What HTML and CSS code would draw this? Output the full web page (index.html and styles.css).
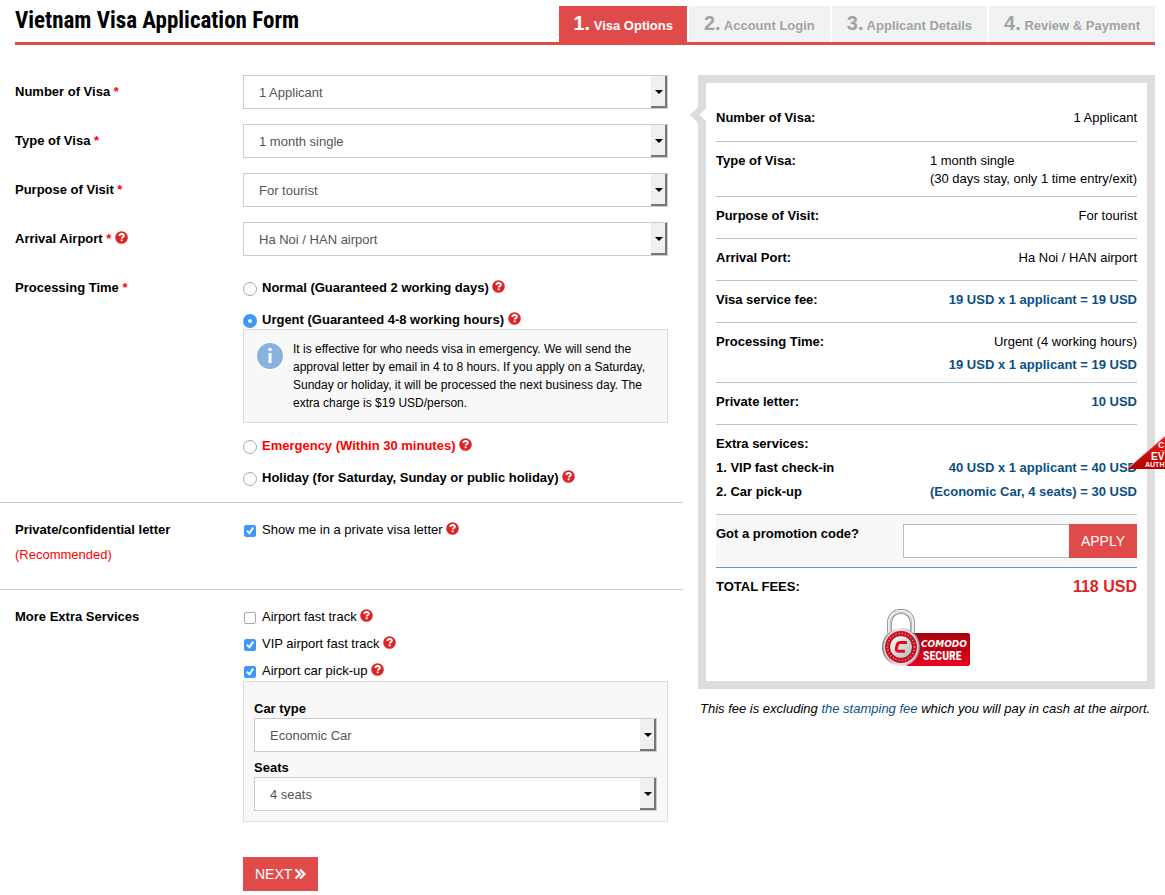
FILE: index.html
```html
<!DOCTYPE html>
<html lang="en">
<head>
<meta charset="utf-8">
<meta name="viewport" content="width=device-width, initial-scale=1">
<title>Vietnam Visa Application Form</title>
<link rel="stylesheet" href="styles.css">
</head>
<body>
<svg class="sprite" aria-hidden="true">
  <symbol id="help" viewBox="0 0 13 13">
    <circle cx="6.5" cy="6.5" r="6.3" fill="#dc2626"/>
    <path d="M4.3 5C4.5 3.6 5.4 3 6.6 3c1.300 0 2.200.7 2.200 1.800C8.800 6.200 6.700 6.200 6.700 7.500" fill="none" stroke="#fff" stroke-width="1.900"/>
    <rect x="5.700" y="8.500" width="1.900" height="1.700" fill="#fff"/>
  </symbol>
</svg>

<header class="top">
  <h1 class="title">Vietnam Visa Application Form</h1>
  <ol class="steps">
    <li class="step step-active"><span class="num">1.</span> Visa Options</li>
    <li class="step"><span class="num">2.</span> Account Login</li>
    <li class="step"><span class="num">3.</span> Applicant Details</li>
    <li class="step"><span class="num">4.</span> Review &amp; Payment</li>
  </ol>
</header>

<main class="layout">
  <form class="form">
    <section class="group">
      <div class="row">
        <label class="name" for="number">Number of Visa <span class="req">*</span></label>
        <div class="select"><select id="number"><option>1 Applicant</option></select></div>
      </div>
      <div class="row">
        <label class="name" for="type">Type of Visa <span class="req">*</span></label>
        <div class="select"><select id="type"><option>1 month single</option></select></div>
      </div>
      <div class="row">
        <label class="name" for="purpose">Purpose of Visit <span class="req">*</span></label>
        <div class="select"><select id="purpose"><option>For tourist</option></select></div>
      </div>
      <div class="row">
        <label class="name" for="airport">Arrival Airport <span class="req">*</span> <svg class="help"><use href="#help"/></svg></label>
        <div class="select"><select id="airport"><option>Ha Noi / HAN airport</option></select></div>
      </div>
      <div class="row">
        <div class="name" id="time">Processing Time <span class="req">*</span></div>
        <div class="options times" role="radiogroup" aria-labelledby="time">
          <label class="option"><input type="radio" name="time"><span>Normal (Guaranteed 2 working days) <svg class="help"><use href="#help"/></svg></span></label>
          <div class="detail">
            <label class="option"><input type="radio" name="time" checked><span>Urgent (Guaranteed 4-8 working hours) <svg class="help"><use href="#help"/></svg></span></label>
            <div class="box info">
              <svg class="info-icon" viewBox="0 0 28 28" aria-hidden="true">
                <circle cx="14" cy="14" r="14" fill="#fff"/>
                <circle cx="14" cy="14" r="13" fill="#8ab2de"/>
                <circle cx="14" cy="7.500" r="1.800" fill="#fff"/>
                <rect x="12.500" y="11" width="3" height="10" fill="#fff"/>
              </svg>
              <p class="info-text">It is effective for who needs visa in emergency. We will send the approval letter by email in 4 to 8 hours. If you apply on a Saturday, Sunday or holiday, it will be processed the next business day. The extra charge is $19 USD/person.</p>
            </div>
          </div>
          <label class="option hot"><input type="radio" name="time"><span>Emergency (Within 30 minutes) <svg class="help"><use href="#help"/></svg></span></label>
          <label class="option"><input type="radio" name="time"><span>Holiday (for Saturday, Sunday or public holiday) <svg class="help"><use href="#help"/></svg></span></label>
        </div>
      </div>
    </section>

    <section class="group">
      <div class="row">
        <div class="name">Private/confidential letter<p class="recommended">(Recommended)</p></div>
        <div class="options">
          <label class="option"><input type="checkbox" checked><span>Show me in a private visa letter <svg class="help"><use href="#help"/></svg></span></label>
        </div>
      </div>
    </section>

    <section class="group">
      <div class="row">
        <div class="name">More Extra Services</div>
        <div class="options extras">
          <label class="option"><input type="checkbox"><span>Airport fast track <svg class="help"><use href="#help"/></svg></span></label>
          <label class="option"><input type="checkbox" checked><span>VIP airport fast track <svg class="help"><use href="#help"/></svg></span></label>
          <div class="detail">
            <label class="option"><input type="checkbox" checked><span>Airport car pick-up <svg class="help"><use href="#help"/></svg></span></label>
            <div class="box car">
              <div class="car-field">
                <label for="car">Car type</label>
                <div class="select"><select id="car"><option>Economic Car</option></select></div>
              </div>
              <div class="car-field">
                <label for="seats">Seats</label>
                <div class="select"><select id="seats"><option>4 seats</option></select></div>
              </div>
            </div>
          </div>
          <button class="btn next" type="button">NEXT
            <svg class="chevrons" viewBox="0 0 12 12" aria-hidden="true"><path d="M1.500 1.500 6 6 1.500 10.500M6 1.500 10.500 6 6 10.500" fill="none" stroke="#fff" stroke-width="2.200"/></svg>
          </button>
        </div>
      </div>
    </section>
  </form>

  <aside class="side">
    <div class="panel">
      <svg class="pointer" viewBox="0 0 16 18" aria-hidden="true">
        <path d="M8 1 0 9l8 8z" fill="#ddd"/>
        <path d="M16 2 9.500 9l6.500 6z" fill="#fff"/>
      </svg>
      <dl class="summary">
        <div class="item"><dt>Number of Visa:</dt><dd>1 Applicant</dd></div>
        <div class="item tight"><dt>Type of Visa:</dt><dd class="left">1 month single<br>(30 days stay, only 1 time entry/exit)</dd></div>
        <div class="item"><dt>Purpose of Visit:</dt><dd>For tourist</dd></div>
        <div class="item"><dt>Arrival Port:</dt><dd>Ha Noi / HAN airport</dd></div>
        <div class="item"><dt>Visa service fee:</dt><dd class="price">19 USD x 1 applicant = 19 USD</dd></div>
        <div class="item tight"><dt>Processing Time:</dt><dd>Urgent (4 working hours)<div class="price sub">19 USD x 1 applicant = 19 USD</div></dd></div>
        <div class="item"><dt>Private letter:</dt><dd class="price">10 USD</dd></div>
        <div class="item services">
          <dt>Extra services:</dt><dd></dd>
          <dt>1. VIP fast check-in</dt><dd class="price">40 USD x 1 applicant = 40 USD</dd>
          <dt>2. Car pick-up</dt><dd class="price">(Economic Car, 4 seats) = 30 USD</dd>
        </div>
      </dl>
      <div class="promo">
        <label class="promo-name" for="promo">Got a promotion code?</label>
        <input class="promo-input" id="promo" type="text">
        <button class="btn" type="button">APPLY</button>
      </div>
      <div class="total"><span>TOTAL FEES:</span><strong class="sum">118 USD</strong></div>
      <svg class="seal" viewBox="0 0 90 58" role="img" aria-label="Comodo Secure">
        <defs>
          <linearGradient id="steel" x1="0" x2="1"><stop offset="0" stop-color="#777"/><stop offset=".4" stop-color="#f5f5f5"/><stop offset="1" stop-color="#888"/></linearGradient>
          <linearGradient id="plate" x1="0" x2="0" y1="0" y2="1"><stop offset="0" stop-color="#a90010"/><stop offset=".5" stop-color="#c00013"/><stop offset="1" stop-color="#f00020"/></linearGradient>
          <linearGradient id="face" x1="0" x2="1" y1="0" y2="1"><stop offset="0" stop-color="#fff"/><stop offset="1" stop-color="#b5b5b5"/></linearGradient>
        </defs>
        <rect x="24" y="24" width="64" height="33" rx="2" fill="url(#plate)"/>
        <path d="M7.500 24V14C7.500-1.500 30.500-1.500 30.500 14V24" fill="none" stroke="#888" stroke-width="5"/>
        <path d="M7.500 24V14C7.500-1.500 30.500-1.500 30.500 14V24" fill="none" stroke="#ececec" stroke-width="3.500"/>
        <path d="M8.500 24V14C8.500 0 29.500 0 29.500 14V24" fill="none" stroke="#bbb" stroke-width="1"/>
        <circle cx="19" cy="38" r="19" fill="url(#steel)"/>
        <circle cx="19" cy="38" r="17.500" fill="#dcdcdc"/>
        <circle cx="19" cy="38" r="16" fill="#cf1020"/>
        <circle cx="19" cy="38" r="13.500" fill="none" stroke="#ff9a9a" stroke-width="1.300" stroke-dasharray="1 2.200"/>
        <circle cx="19" cy="38" r="11.500" fill="url(#face)" stroke="#8c0f18"/>
        <path d="M25 33.500h-6.500q-2.500 0-3.100 2l-1 3.700q-.6 3 2 3h6.500" fill="none" stroke="#e00b20" stroke-width="3"/>
        <text class="seal-brand" x="39" y="38">COMODO</text>
        <text class="seal-word" x="41" y="51">SECURE</text>
      </svg>
    </div>
    <p class="note">This fee is excluding <a href="#">the stamping fee</a> which you will pay in cash at the airport.</p>
  </aside>
</main>

<svg class="corner" viewBox="0 0 38 34" role="img" aria-label="Trust seal">
  <defs><linearGradient id="ribbon" x1="0" x2="0" y1="0" y2="1"><stop offset="0" stop-color="#ee1c1c"/><stop offset="1" stop-color="#b40000"/></linearGradient></defs>
  <path d="M0 33 38 0v33z" fill="url(#ribbon)"/>
  <path d="M0 33 38 0" stroke="#f7bcbc" fill="none"/>
  <path d="M33 15h5" stroke="#f08080"/>
  <text class="corner-top" x="31" y="12">C</text>
  <text class="corner-mid" x="24" y="24">EV</text>
  <text class="corner-small" x="18" y="31">AUTH</text>
</svg>
</body>
</html>
```

FILE: styles.css
```css
* { box-sizing: border-box; }

body {
  position: relative;
  margin: 0;
  overflow-x: hidden;
  background: #fff;
  color: #000;
  font: 13px/18px "Liberation Sans", Arial, sans-serif;
}

p, dl, dd, ol, h1 { margin: 0; padding: 0; }
input, select, button { font: inherit; border-radius: 0; }
.sprite { position: absolute; width: 0; height: 0; }

/* Header and steps */
.top {
  display: flex;
  align-items: flex-end;
  justify-content: space-between;
  margin: 0 10px 0 15px;
  padding-top: 6px;
  border-bottom: 3px solid #df4b4b;
}
.title {
  align-self: flex-start;
  font: bold 23px/30px "Roboto Condensed", "Liberation Sans Narrow", "Liberation Sans", sans-serif;
  white-space: nowrap;
}
.steps { display: flex; gap: 2px; list-style: none; }
.step {
  height: 36px;
  padding: 0 15px;
  background: #f1f3f3;
  color: #a3a3a3;
  font-weight: bold;
  line-height: 34px;
  white-space: nowrap;
}
.step-active { padding: 0 14px; background: #df4b4b; color: #fff; }
.num { font-size: 20px; }

/* Page grid */
.layout {
  display: grid;
  grid-template-columns: minmax(0, 683fr) minmax(0, 482fr);
  padding-top: 30px;
}
.side { padding: 0 10px 0 15px; }

/* Form */
.group { padding: 0 15px 15px; }
.group + .group { padding: 10px 15px 25px; border-top: 1px solid #ccc; }
.group:last-child { padding-bottom: 4px; }
.row { display: grid; grid-template-columns: 228px minmax(0, 1fr); }
.row + .row { margin-top: 15px; }
.name { padding-top: 8px; font-weight: bold; }
.req { color: #f00; }
.recommended { margin-top: 7px; color: #f00; font-weight: normal; }
.help { width: 13px; height: 13px; vertical-align: -1px; }

.select { position: relative; }
.select::before {
  content: "";
  position: absolute;
  right: 1px;
  top: 1px;
  bottom: 1px;
  width: 14px;
  border: solid #777;
  border-width: 0 2px 2px 0;
  background: #f0f0f0;
  pointer-events: none;
}
.select::after {
  content: "";
  position: absolute;
  right: 5px;
  top: 15px;
  border: 4px solid transparent;
  border-top-color: #000;
  border-bottom: 0;
  pointer-events: none;
}
.select select {
  display: block;
  appearance: none;
  width: 100%;
  height: 34px;
  padding: 2px 20px 0 15px;
  border: 1px solid #ccc;
  background: #fff;
  color: #555;
}

.options { display: flex; flex-direction: column; padding-top: 8px; }
.times { gap: 14px; font-weight: bold; }
.extras { gap: 9px; }
.option { display: flex; gap: 5px; }
.option input {
  appearance: none;
  flex: none;
  width: 14px;
  height: 14px;
  margin: 3px 0 0;
  border: 1px solid #aaa;
  background: #fff;
}
.option input[type="radio"] { border-radius: 50%; }
.option input[type="radio"]:checked { border: 5px solid #3b99fc; }
.option input[type="checkbox"] { width: 12px; height: 12px; margin: 4px 1px 0; border-radius: 2px; }
.option input[type="checkbox"]:checked { border-color: #3b99fc; background: #3b99fc; }
.option input[type="checkbox"]:checked::before {
  content: "";
  display: block;
  width: 10px;
  height: 10px;
  background: #fff;
  clip-path: polygon(12% 54%, 26% 40%, 43% 58%, 73% 10%, 90% 22%, 46% 88%);
}
.hot { color: #f00; }

.box { border: 1px solid #ddd; background: #f8f8f8; }
.info { display: flex; gap: 9px; padding: 10px 12px; font-weight: normal; }
.info-icon { flex: none; width: 28px; height: 28px; margin-top: 2px; }
.info-text { font-size: 12px; }
.car { display: grid; gap: 7px; margin-top: 1px; padding: 18px 10px 10px; }
.car-field label { display: block; font-weight: bold; }

.btn {
  height: 34px;
  padding: 0 12px;
  border: 0;
  background: #df4b4b;
  color: #fff;
  font-size: 14px;
}
.next { display: flex; align-items: center; gap: 2px; align-self: flex-start; margin-top: 26px; }
.chevrons { width: 12px; height: 12px; }

/* Summary */
.panel {
  position: relative;
  padding: 16px 10px 14px;
  border: 8px solid #ddd;
}
.pointer { position: absolute; left: -16px; top: 23px; width: 16px; height: 18px; }
.item {
  display: flex;
  justify-content: space-between;
  padding: 10px 0 13px;
  border-bottom: 1px solid #bcc4c8;
}
.item:first-child { padding-bottom: 14px; }
.item.tight { padding-bottom: 8px; }
.item dt { font-weight: bold; }
.item dd { text-align: right; }
.item dd.left { text-align: left; }
.price { color: #0b4f85; font-weight: bold; }
.sub { margin-top: 5px; }
.item.services { display: grid; grid-template-columns: auto auto; row-gap: 6px; }

.promo {
  display: flex;
  padding: 9px 0;
  border-bottom: 1px solid #6b9ab5;
  background: #f8f8f8;
}
.promo-name { flex: 1; padding-top: 1px; font-weight: bold; }
.promo-input {
  width: 166px;
  height: 34px;
  padding: 0 10px;
  border: 1px solid #bbb;
  border-right: 0;
  background: #fff;
}
.total { display: flex; justify-content: space-between; padding-top: 10px; font-weight: bold; }
.sum { color: #dc2626; font-size: 16px; }
.seal { display: block; width: 90px; height: 58px; margin: 13px auto 0; }
.seal-brand { fill: #fff; font: italic bold 9px "DejaVu Sans", sans-serif; }
.seal-word { fill: #fff; font: bold 12px "Roboto Condensed", "Liberation Sans Narrow", sans-serif; }
.note { margin: 11px 0 0 2px; font-style: italic; white-space: nowrap; }
.note a { color: #0b4f85; text-decoration: none; }

.corner { position: absolute; right: 0; top: 436px; width: 38px; height: 34px; }
.corner-top { fill: #fff; font: bold 9px "Liberation Sans", sans-serif; }
.corner-mid { fill: #fff; font: bold 10px "Liberation Sans", sans-serif; }
.corner-small { fill: #fff; font: bold 7px "Liberation Sans", sans-serif; }
```
